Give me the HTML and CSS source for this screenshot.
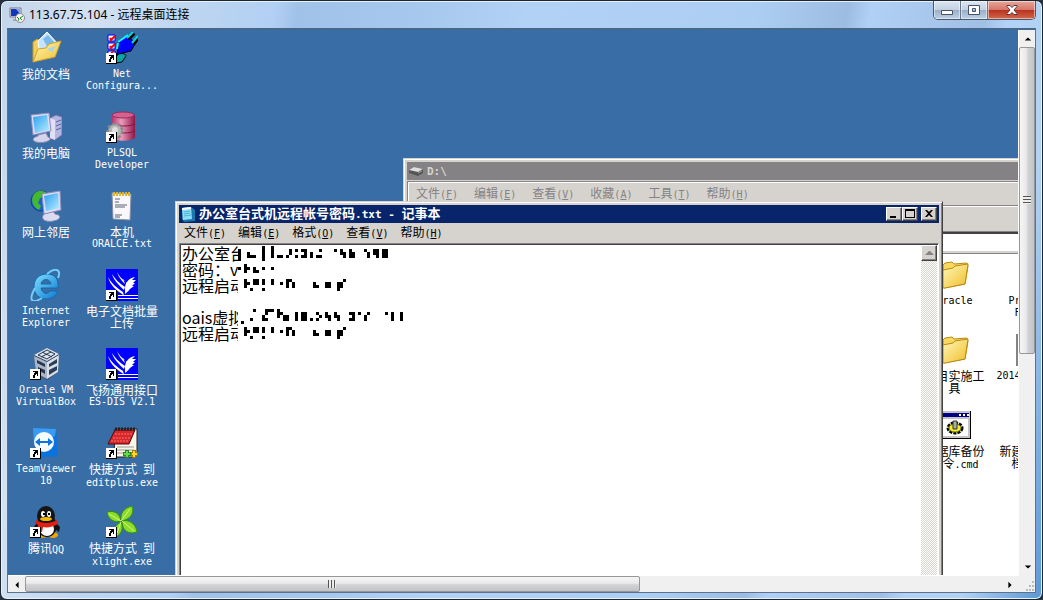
FILE: index.html
```html
<!DOCTYPE html>
<html lang="zh-CN">
  <head>
    <meta charset="UTF-8" />
    <title>113.67.75.104 - 远程桌面连接</title>
    <link rel="stylesheet" href="styles.css">
  </head>

  <body>
    <!-- shared icons -->
    <svg class="defs" width="0" height="0" aria-hidden="true">
      <linearGradient id="gold" x1="0" y1="0" x2="1" y2="1">
        <stop offset="0" stop-color="#fff9b8" />
        <stop offset="1" stop-color="#efbd2c" />
      </linearGradient>
      <linearGradient id="screen" x1="0" y1="0" x2="1" y2="1">
        <stop offset="0" stop-color="#2f9df0" />
        <stop offset="1" stop-color="#b4f0ff" />
      </linearGradient>
      <linearGradient id="plum" x1="0" y1="0" x2="1" y2="0">
        <stop offset="0" stop-color="#b8346e" />
        <stop offset=".4" stop-color="#ee9cbc" />
        <stop offset="1" stop-color="#8e1648" />
      </linearGradient>
      <linearGradient id="sea" x1="0" y1="0" x2="1" y2="1">
        <stop offset="0" stop-color="#7fe0ff" />
        <stop offset="1" stop-color="#0b79cf" />
      </linearGradient>
      <symbol id="shortcut" viewBox="0 0 32 32">
        <path d="M0 21h11v11H0z" fill="#000" />
        <path d="M0 21h10v10H0z" fill="#fff" />
        <path d="M3 23h5v5H7v-2H6v1H5v3H3v-3h1v-2h1v-1H3z" fill="#000" />
      </symbol>
      <symbol id="folder" viewBox="0 0 32 32">
        <path d="M4 6l2-2 7-1 2 2 13-1 1 3-3 18-21 4z" fill="#f7d860" stroke="#bb8a10" />
        <path d="M4 29V11l10-2 2-2 13-2-3 20-20 4z" fill="url(#gold)" stroke="#bb8a10" />
      </symbol>
      <symbol id="bird" viewBox="0 0 32 32">
        <path d="M0 0h32v32H0z" fill="#00f" />
        <path d="M2 8c2 8 8 13 14 17l2 2-1-4C11 19 6 15 2 8zM6 5c2 7 7 11 12 16l1-3C13 14 9 10 6 5zM11 3c2 6 5 9 9 13v-3c-4-3-7-6-9-10zM19 25v-7c1-5 4-9 10-10l-3 3h4l-3 3h2l-3 3h2l-4 3c-1 2-3 3-5 5zM17 10l4 4-1 3z" fill="#fff" />
        <path d="M12 26h20v1H12zM12 29h20v1H12z" fill="#fff" />
      </symbol>
      <symbol id="notepad" viewBox="0 0 16 16">
        <path d="M2 2l9-1 4 3v11l-11 1-2-3z" fill="#1879ad" />
        <path d="M2 2l9-1 1 12-9 1z" fill="#8fdcf5" />
        <path d="M2 2l9-1v2l-9 1z" fill="#fff" />
        <path d="M4 6l6-1M4 8l6-1M4 10l7-1" stroke="#4db4dc" />
      </symbol>
    </svg>

    <div class="rdp">
      <header class="rdp-title">
        <svg class="rdp-icon" viewBox="0 0 16 16">
          <path d="M1 1h11v9H1z" fill="#e6e6ee" stroke="#77778c" />
          <path d="M2 2h9v7H2z" fill="#1236b8" />
          <path d="M7 2h4v5z" fill="#7da6f4" />
          <path d="M4 12h7v2H4z" fill="#a5a5b4" />
          <circle cx="11" cy="11" r="4.5" fill="#f3f3f3" stroke="#8a8a8a" />
          <path d="M8 10l2 2-1 2M14 9l-3 2 2 2" fill="none" stroke="#218a1d" />
        </svg>
        <h1>113.67.75.104 - 远程桌面连接</h1>
        <div class="caption-buttons">
          <button class="cap cap-min" aria-label="最小化">
            <svg viewBox="0 0 14 12"><path d="M1.500 6.500h11v4h-11z" fill="#fff" stroke="#44526b" /></svg>
          </button>
          <button class="cap cap-max" aria-label="最大化">
            <svg viewBox="0 0 14 12"><path d="M1.500 1.500h11v9h-11zM5.500 4.500v3h3v-3z" fill="#fff" fill-rule="evenodd" stroke="#44526b" /></svg>
          </button>
          <button class="cap cap-close" aria-label="关闭">
            <svg viewBox="0 0 14 12"><path d="M2 1.500h3l2 2 2-2h3v1L9 6l3 3.500v1H9l-2-2-2 2H2v-1L5 6 2 2.500z" fill="#fff" stroke="#5b3036" /></svg>
          </button>
        </div>
      </header>

      <div class="client">
        <main class="desktop">
          <ul class="shortcuts">
            <li>
              <svg class="icon" viewBox="0 0 32 32">
                <path d="M3 10l4-3 4 2 1 18-9 3z" fill="#f4cf58" stroke="#c99a25" />
                <path d="M8 9l9-9 11 12-9 13-10-7z" fill="#c4e4fb" stroke="#fff" />
                <path d="M13 7l5-4 6 7-6 6z" fill="#78b8ee" />
                <path d="M3 30l5-13 8-1 3-4 12-3-6 16z" fill="url(#gold)" stroke="#d0a02a" />
                <path d="M17 17l9-3-4 6z" fill="#a5d5f5" />
              </svg>
              <a href="#">我的文档</a>
            </li>
            <li>
              <svg class="icon" viewBox="0 0 32 32">
                <path d="M8 24l8-2 2 4c3 1 3 3 0 4-4 2-11 2-14 0-2-2 0-4 4-5z" fill="#d5d4ea" stroke="#8788b5" />
                <path d="M20 7l6-3 6 2v18l-7 5-5-2z" fill="#b5b5e1" stroke="#7273ab" />
                <path d="M20 7l5 2v20l-5-2z" fill="#e0e0f5" />
                <path d="M26 11l5-2M26 15l5-2M26 19l5-2" stroke="#5e609d" />
                <path d="M1 4L19 2l2 18-18 4z" fill="#dcdcf2" stroke="#8c8cc0" />
                <path d="M3 6l14-2 2 15-14 3z" fill="url(#screen)" />
              </svg>
              <a href="#">我的电脑</a>
            </li>
            <li>
              <svg class="icon" viewBox="0 0 32 32">
                <circle cx="11" cy="11" r="10" fill="#1a63cf" stroke="#0b418f" />
                <path d="M4 4c5-5 9-3 13-1l-3 4-4 1-2 5 3 3-2 4c-6-3-9-10-5-16z" fill="#45b92e" />
                <path d="M14 24l9-3 2 3c6 1 6 4 2 6-5 2-12 2-14-1-1-2 0-4 1-5z" fill="#dcdcf0" stroke="#8788b5" />
                <path d="M12 4l18-3 1 19-17 4z" fill="#dcdcf2" stroke="#8c8cc0" />
                <path d="M14 6l14-3 1 15-13 3z" fill="url(#screen)" />
              </svg>
              <a href="#">网上邻居</a>
            </li>
            <li>
              <svg class="icon" viewBox="0 0 32 32">
                <path d="M28 19c1-9-3-14-11-14C9 5 4 10 4 18c0 7 5 12 12 12 6 0 10-3 12-8h-8c-2 4-8 3-9-3zM11 15c1-6 9-6 10 0z" fill="url(#sea)" fill-rule="evenodd" stroke="#1668ae" />
                <path d="M5 19C-3 34 4 34 12 29M17 5c8-7 15-5 11 4" fill="none" stroke="#72cff8" stroke-width="2" />
              </svg>
              <a href="#"><span class="en">Internet</span><span class="en">Explorer</span></a>
            </li>
            <li>
              <svg class="icon" viewBox="0 0 32 32">
                <path d="M4 7L17 0l12 6-1 18-11 8L6 25z" fill="#30425a" />
                <path d="M4 7L17 0l12 6-12 7z" fill="#dce4ee" />
                <path d="M8 7l9-5 8 4-8 5zM12 4l10 5M21 4L11 9" fill="none" stroke="#24364e" />
                <path d="M4 8l13 6v17L6 25z" fill="#aab6c6" />
                <path d="M7 12l8 4v3l-8-4zM8 19l7 3v4l-7-4z" fill="#26384f" />
                <path d="M17 14l12-7-1 17-11 7z" fill="#d8dfe8" />
                <path d="M19 16l8-5v4l-8 4zM19 22l8-4v4l-8 5z" fill="#2c3e56" />
                <use href="#shortcut" />
              </svg>
              <a href="#"><span class="en">Oracle VM</span><span class="en">VirtualBox</span></a>
            </li>
            <li>
              <svg class="icon" viewBox="0 0 32 32">
                <path d="M3 1l23 1 2 27-22 2z" fill="#0b73e0" />
                <path d="M3 1l23 1-1 7L4 17z" fill="#3a9bf5" />
                <circle cx="14" cy="15" r="10" fill="#f5fbff" />
                <path d="M5 15l5-4v3h8v-3l5 4-5 4v-3h-8v3z" fill="#0d74dd" />
                <use href="#shortcut" />
              </svg>
              <a href="#"><span class="en">TeamViewer</span><span class="en">10</span></a>
            </li>
            <li>
              <svg class="icon" viewBox="0 0 32 32">
                <path d="M7 17L2 23l2 3 5-4zM25 16l5 5-1 5-5-4z" fill="#111" />
                <ellipse cx="12" cy="29" rx="6" ry="3" fill="#f6a400" />
                <ellipse cx="23" cy="29" rx="5" ry="3" fill="#f6a400" />
                <ellipse cx="17" cy="20" rx="10" ry="11" fill="#111" />
                <ellipse cx="17" cy="23" rx="7" ry="7" fill="#fff" />
                <ellipse cx="16" cy="10" rx="9" ry="10" fill="#151515" />
                <ellipse cx="13" cy="8" rx="2" ry="3" fill="#fff" />
                <ellipse cx="19" cy="8" rx="2" ry="3" fill="#fff" />
                <path d="M13 7h2v2h-2zM18 7h2v2h-2z" />
                <ellipse cx="16" cy="13" rx="6" ry="2" fill="#f9b400" />
                <path d="M6 14c6 4 14 4 21 0l1 4c-5 3-11 4-15 3l-1 5-5-1 1-6-3-2z" fill="#e21f12" />
                <use href="#shortcut" />
              </svg>
              <a href="#">腾讯<span class="mix">QQ</span></a>
            </li>
            <li>
              <svg class="icon" viewBox="0 0 32 32">
                <path d="M2 3h7v6H2zM2 11h7v6H2zM2 19h7v3H2z" fill="#fff" stroke="#00f" />
                <path d="M4 6l1 2 4-4M4 14l1 2 4-4M5 21l3-2" fill="none" stroke="#f00" stroke-width="2" />
                <path d="M12 10l10-7 7 9-4 7-9 2-2 5-3-4 1-6z" fill="#00f" stroke="#000" />
                <path d="M12 10l10-7M12 11l-1 6" stroke="#0ff" stroke-width="2" />
                <path d="M22 7l6-6M27 12l5-6" stroke="#000" stroke-width="4" />
                <path d="M21 6l6-6M26 11l6-7" stroke="#0dd" stroke-width="2" />
                <path d="M10 25c2-5 10-4 10-1l-4 6-6 1z" fill="#0aa6a6" stroke="#000" />
                <use href="#shortcut" />
              </svg>
              <a href="#"><span class="en">Net</span><span class="en">Configura...</span></a>
            </li>
            <li>
              <svg class="icon" viewBox="0 0 32 32">
                <path d="M6 4v22c0 5 23 5 23 0V4z" fill="url(#plum)" />
                <ellipse cx="17" cy="4" rx="11" ry="3" fill="#d5618f" stroke="#9c2d5b" />
                <path d="M6 12c0 4 23 4 23 0M6 19c0 4 23 4 23 0" fill="none" stroke="#801542" />
                <circle cx="9" cy="20" r="7" fill="#a9a9a9" stroke="#8a8a8a" stroke-width="3" stroke-dasharray="3 2" />
                <circle cx="9" cy="20" r="6" fill="#b4b4b4" />
                <circle cx="9" cy="19" r="3" fill="#dedede" />
                <use href="#shortcut" />
              </svg>
              <a href="#"><span class="en">PLSQL</span><span class="en">Developer</span></a>
            </li>
            <li>
              <svg class="icon" viewBox="0 0 32 32">
                <path d="M6 3l19 1-1 26-17-1z" fill="#f8f8fb" stroke="#8a8fa5" />
                <path d="M7 4h18" stroke="#e0b424" stroke-width="4" stroke-dasharray="2 1" />
                <path d="M9 9h5M9 15h12M9 17h10M9 12h4M9 25h7M9 27h5" stroke="#5d6274" />
              </svg>
              <a href="#">本机<span class="en">ORALCE.txt</span></a>
            </li>
            <li>
              <svg class="icon" viewBox="0 0 32 32"><use href="#bird" /><use href="#shortcut" /></svg>
              <a href="#">电子文档批量<br>上传</a>
            </li>
            <li>
              <svg class="icon" viewBox="0 0 32 32"><use href="#bird" /><use href="#shortcut" /></svg>
              <a href="#">飞扬通用接口<span class="en">ES-DIS V2.1</span></a>
            </li>
            <li>
              <svg class="icon" viewBox="0 0 32 32">
                <path d="M9 2h22v25l-4 3H8z" fill="#f8f6e8" stroke="#222" />
                <path d="M11 20h17M11 23h17M11 26h12" stroke="#9a9a9a" />
                <path d="M9 3h20l-6 14H2z" fill="#d8262a" stroke="#4c0a0c" />
                <path d="M9 7h17M7 11h17M5 14h17" stroke="#f57970" stroke-dasharray="2 1" />
                <path d="M9 2h20" stroke="#222" stroke-width="3" stroke-dasharray="2 1" />
                <path d="M17 27h8M21 23v8" stroke="#278a1c" stroke-width="4" />
                <path d="M18 27h6M21 24v6" stroke="#6bd653" stroke-width="2" />
                <path d="M25 27h7M28 23v8" stroke="#a97800" stroke-width="4" />
                <path d="M26 27h5M28 24v6" stroke="#ffd82e" stroke-width="2" />
                <use href="#shortcut" />
              </svg>
              <a href="#">快捷方式<span class="mix"> </span>到<span class="en">editplus.exe</span></a>
            </li>
            <li>
              <svg class="icon" viewBox="0 0 32 32">
                <g fill="#8edc28" stroke="#2e9212">
                  <path d="M15 15C9 17 2 14 1 6c8-2 13 2 14 9z" />
                  <path d="M15 15c-1-8 3-13 11-15 3 7-2 14-11 15z" />
                  <path d="M16 15c7-2 14 3 15 11-8 3-15-1-15-11z" />
                  <path d="M15 16c3 7 0 12-5 15-4-5-2-12 5-15z" />
                </g>
                <path d="M3 8l12 7 9-12M16 15l12 10M15 16l-4 11" fill="none" stroke="#d3f58c" />
                <use href="#shortcut" />
              </svg>
              <a href="#">快捷方式<span class="mix"> </span>到<span class="en">xlight.exe</span></a>
            </li>
          </ul>

          <section class="window explorer">
            <div class="titlebar">
              <svg class="title-icon" viewBox="0 0 16 16">
                <path d="M1 7l5-3 9 2v4l-5 3-9-3z" fill="#555" />
                <path d="M1 7l5-3 9 2-5 3z" fill="#ddd" />
                <path d="M10 10l4-2" stroke="#9d9d9d" />
              </svg>
              <h2><span class="title-en">D:\</span></h2>
            </div>
            <div class="explorer-bars">
              <nav class="menubar">
                <button>文件<span class="en">(<u>F</u>)</span></button>
                <button>编辑<span class="en">(<u>E</u>)</span></button>
                <button>查看<span class="en">(<u>V</u>)</span></button>
                <button>收藏<span class="en">(<u>A</u>)</span></button>
                <button>工具<span class="en">(<u>T</u>)</span></button>
                <button>帮助<span class="en">(<u>H</u>)</span></button>
              </nav>
              <div class="toolbar"></div>
            </div>
            <div class="address"></div>
            <ul class="files">
              <li>
                <svg class="icon" viewBox="0 0 32 32"><use href="#folder" /></svg>
                <a href="#"><span class="en">Oracle</span></a>
              </li>
              <li>
                <svg class="icon" viewBox="0 0 32 32"></svg>
                <a href="#"><span class="en">Program</span><span class="en">Files</span></a>
              </li>
              <li>
                <svg class="icon" viewBox="0 0 32 32"><use href="#folder" /></svg>
                <a href="#">项目实施工<br>具</a>
              </li>
              <li>
                <svg class="icon" viewBox="0 0 32 32"><path d="M3 1h26v30H3z" fill="#fff" stroke="#848284" stroke-width="2" /></svg>
                <a href="#"><span class="en">20141103_db</span></a>
              </li>
              <li>
                <svg class="icon" viewBox="0 0 32 32">
                  <path d="M0 2h32v28H0z" fill="#000" />
                  <path d="M0 2h31v27H0z" fill="#c6c3c6" />
                  <path d="M1 4h29v4H1z" fill="#000084" />
                  <path d="M20 5h2v2h-2zM24 5h2v2h-2zM28 5h2v2h-2z" fill="#fff" />
                  <path d="M1 10h28v17H1z" fill="#fff" />
                  <ellipse cx="16" cy="19" rx="7" ry="5" fill="#e4e020" stroke="#000" stroke-width="3" stroke-dasharray="3 1" />
                  <ellipse cx="16" cy="19" rx="6" ry="4" fill="#f2ef2c" stroke="#77750e" />
                  <path d="M14 12h4v8h-4z" fill="#aaa" stroke="#333" />
                </svg>
                <a href="#">数据库备份<br>命令<span class="mix">.cmd</span></a>
              </li>
              <li>
                <svg class="icon" viewBox="0 0 32 32"></svg>
                <a href="#">新建文本文<br>档<span class="mix">.txt</span></a>
              </li>
            </ul>
          </section>

          <section class="window notepad">
            <div class="titlebar">
              <svg class="title-icon" viewBox="0 0 16 16"><use href="#notepad" /></svg>
              <h2>办公室台式机远程帐号密码<span class="title-en">.txt - </span>记事本</h2>
              <div class="window-buttons">
                <button aria-label="最小化"><svg viewBox="0 0 12 10"><path d="M2 7h6v2H2z" /></svg></button>
                <button aria-label="最大化"><svg viewBox="0 0 12 10"><path d="M1 0h10v9H1zM2 2v6h8V2z" fill-rule="evenodd" /></svg></button>
                <button class="close" aria-label="关闭"><svg viewBox="0 0 12 10"><path d="M2 1h2l2 2 2-2h2L7 4.500 10 8H8L6 6 4 8H2l3-3.500z" /></svg></button>
              </div>
            </div>
            <nav class="menubar">
              <button>文件<span class="en">(<u>F</u>)</span></button>
              <button>编辑<span class="en">(<u>E</u>)</span></button>
              <button>格式<span class="en">(<u>O</u>)</span></button>
              <button>查看<span class="en">(<u>V</u>)</span></button>
              <button>帮助<span class="en">(<u>H</u>)</span></button>
            </nav>
            <div class="editor">
              <textarea aria-label="记事本" spellcheck="false">办公室台
密码：v
远程启动

oais虚拟
远程启动</textarea>
              <!-- redaction blocks over the account details, one unit per block -->
              <svg class="redacted" viewBox="-0.500 0 60 32" shape-rendering="crispEdges">
                <g fill="none" stroke="#000">
                  <path d="M0 1v4M3 2v2M4 3v1M5 3v1M8 0v5M11 0v4M13 3v1M14 3v1M16 3v1M17 1v2M19 1v1M19 3v1M21 1v1M21 3v1M22 1v3M24 2v2M26 3v1M27 1v1M27 3v1M32 1v1M34 1v2M35 2v2M37 1v3M38 2v2M42 1v1M43 2v2M45 1v2M46 1v3M48 1v3M49 1v3" />
                  <path d="M0 7v1M2 6v3M3 7v1M5 7v2M6 8v1M8 7v1M11 7v1" />
                  <path id="blocks" d="M2 11v3M3 12v1M4 14v1M5 11v2M6 11v2M8 11v2M8 14v1M11 11v2M14 12v1M16 11v3M17 11v1M18 12v2M25 12v2M26 13v1M29 12v2M30 12v2M33 12v3M34 12v2M35 11v1" />
                  <path d="M1 25v1M4 24v1M5 21v1M8 23v2M9 21v2M9 24v1M10 21v1M11 21v1M13 21v3M14 22v1M15 23v2M16 23v2M19 22v3M21 22v3M22 22v3M24 24v1M26 22v1M26 24v1M27 23v1M29 22v2M30 23v2M32 22v2M33 23v2M37 22v1M37 24v1M38 22v3M40 22v1M42 23v2M43 22v1M49 22v1M51 22v3M54 22v3" />
                  <use href="#blocks" y="16" />
                </g>
              </svg>
              <div class="scroll">
                <button aria-label="向上滚动"><svg viewBox="0 0 12 12"><path d="M2 8h9L7 4H6z" fill="#848284" /></svg></button>
              </div>
            </div>
          </section>
        </main>

        <div class="vscroll">
          <button aria-label="向上"><svg viewBox="0 0 10 10"><path d="M1 7l4-4 4 4z" /></svg></button>
          <div class="track"><div class="thumb"></div></div>
          <button aria-label="向下"><svg viewBox="0 0 10 10"><path d="M1 3l4 4 4-4z" /></svg></button>
        </div>
        <div class="hscroll">
          <button aria-label="向左"><svg viewBox="0 0 10 10"><path d="M7 1L3 5l4 4z" /></svg></button>
          <div class="track"><div class="thumb"></div></div>
          <button aria-label="向右"><svg viewBox="0 0 10 10"><path d="M3 1l4 4-4 4z" /></svg></button>
        </div>
        <div class="corner">
          <svg viewBox="0 0 12 12"><path d="M9 1h2v2H9zM6 5h2v2H6zM9 5h2v2H9zM3 9h2v2H3zM6 9h2v2H6zM9 9h2v2H9z" fill="#bbb" /></svg>
        </div>
      </div>
    </div>
  </body>
</html>
```

FILE: styles.css
```css
* {
  box-sizing: border-box;
}

body {
  margin: 0;
  background: #26323f;
  font-family: "Noto Sans CJK SC", sans-serif;
  font-size: 12px;
  line-height: 12px;
  color: #000;
}

h1,
h2,
ul {
  margin: 0;
  padding: 0;
  font-size: inherit;
  list-style: none;
}

button {
  margin: 0;
  padding: 0;
  border: 0;
  background: none;
  font: inherit;
  color: inherit;
}

svg {
  display: block;
}

a {
  color: inherit;
  text-decoration: none;
}

.defs {
  position: absolute;
}

.en,
.mix {
  font-family: "DejaVu Sans Mono", monospace;
  font-size: 10px;
}

/* remote desktop frame */
.rdp {
  display: flex;
  flex-direction: column;
  height: 100vh;
  padding: 0 6px 6px;
  border: 1px solid #1d2530;
  border-radius: 7px;
  background: linear-gradient(100deg, #c3d5ea 0, #d3e1f1 8%, #bfd6f0 16%, #b1d0f4 24%, #a1c2e8 26%, #a8c9ee 38%, #b1d1f5 46%, #adcef3 66%, #9cbce2 74%, #b0d0f5 76%, #9fbfe5 86%, #b3d2f5 88%, #b2d2f4 93%, #5b97d4 100%);
  box-shadow: inset 0 0 0 1px #e8f2fc;
}

.rdp-title {
  display: flex;
  align-items: center;
  height: 27px;
  padding-left: 2px;
}

.rdp-title h1 {
  flex: 1;
  margin-left: 4px;
  font-family: "Noto Sans", "Noto Sans CJK SC", sans-serif;
  font-weight: normal;
  line-height: 16px;
}

.rdp-icon {
  width: 16px;
  height: 16px;
}

.caption-buttons {
  display: flex;
  align-self: flex-start;
  border: 1px solid #4b5666;
  border-top: 0;
  border-radius: 0 0 5px 5px;
  overflow: hidden;
}

.cap {
  display: grid;
  place-items: center;
  width: 27px;
  height: 18px;
  border-right: 1px solid #69778b;
  background: linear-gradient(#dce6f1 0, #c3d1e1 48%, #9aaec7 50%, #bdd0e6 100%);
  box-shadow: inset 0 0 0 1px rgba(255, 255, 255, 0.5);
}

.cap svg {
  width: 14px;
  height: 12px;
}

.cap-close {
  width: 47px;
  border: 0;
  background: linear-gradient(#e7a799 0, #d4776a 48%, #b9301c 50%, #d2694c 100%);
}

.client {
  flex: 1;
  min-height: 0;
  display: grid;
  grid-template-columns: 1fr 17px;
  grid-template-rows: 1fr 17px;
  border: 1px solid #59728e;
  border-top: 2px solid #46688d;
}

.desktop {
  position: relative;
  overflow: hidden;
  background: #396da5;
}

/* desktop icons */
.shortcuts {
  display: grid;
  grid-auto-flow: column;
  grid-template-rows: repeat(7, 79px);
  grid-auto-columns: 76px;
  justify-content: start;
  padding-top: 2px;
  color: #fff;
}

.shortcuts li,
.files li {
  display: flex;
  flex-direction: column;
  align-items: center;
  gap: 4px;
  text-align: center;
  white-space: nowrap;
}

.icon {
  width: 32px;
  height: 32px;
}

.shortcuts .en,
.files .en {
  display: block;
}

/* classic windows */
.window {
  position: absolute;
  display: flex;
  flex-direction: column;
  padding: 3px;
  border: 1px solid #d6d3ce;
  border-right-color: #424142;
  background: #d6d3ce;
  box-shadow: inset 1px 1px #fff, inset -1px 0 #848284;
}

.titlebar {
  display: flex;
  align-items: center;
  height: 18px;
  padding: 0 2px 0 1px;
  background: #08246b;
  color: #fff;
}

.titlebar h2 {
  flex: 1;
  margin-left: 3px;
  font-size: 13px;
  line-height: 18px;
  white-space: pre;
}

.title-en {
  font-family: "DejaVu Sans Mono", monospace;
  font-size: 11px;
}

.title-icon {
  width: 16px;
  height: 16px;
}

.menubar {
  display: flex;
  gap: 12px;
  align-items: center;
  height: 20px;
  padding-left: 5px;
}

.menubar u {
  text-underline-offset: 1px;
}

.window-buttons {
  display: flex;
}

.window-buttons button,
.scroll button {
  display: grid;
  place-items: center;
  width: 16px;
  height: 14px;
  border: 1px solid #fff;
  border-right-color: #424142;
  border-bottom-color: #424142;
  background: #d6d3ce;
  box-shadow: inset -1px -1px #848284;
}

.window-buttons svg {
  width: 12px;
  height: 10px;
}

.window-buttons .close {
  margin-left: 3px;
}

.notepad {
  top: 171px;
  bottom: -40px;
  left: 167px;
  width: 768px;
}

.editor {
  position: relative;
  flex: 1;
  display: flex;
  padding: 1px 1px 0;
  border: 1px solid #848284;
  border-right-color: #fff;
  box-shadow: inset 1px 1px #424142;
  background: #fff;
}

.editor textarea {
  flex: 1;
  padding: 0 1px;
  border: 0;
  outline: 0;
  resize: none;
  overflow: hidden;
  background: #fff;
  font-family: "Noto Sans CJK SC", sans-serif;
  font-size: 16px;
  line-height: 16px;
  color: #000;
}

.redacted {
  position: absolute;
  top: 2px;
  left: 58px;
  width: 180px;
  height: 96px;
  background: #fff;
  pointer-events: none;
}

.scroll {
  width: 16px;
  background: repeating-conic-gradient(#d6d3ce 0 25%, #fff 0 50%) 0 0 / 2px 2px;
}

.scroll button {
  height: 16px;
}

.scroll svg {
  width: 12px;
  height: 12px;
}

.explorer {
  top: 128px;
  right: -90px;
  bottom: -40px;
  left: 395px;
}

.explorer .titlebar {
  background: #848284;
  color: #d6d3ce;
}

.explorer-bars {
  margin-top: 1px;
  border: 1px solid #848284;
  box-shadow: inset 1px 1px #fff;
  color: #848284;
}

.explorer .menubar {
  gap: 16px;
  height: 24px;
  padding-left: 8px;
  border-bottom: 1px solid #848284;
}

.toolbar {
  height: 25px;
  border-top: 1px solid #fff;
}

.address {
  height: 20px;
  border-top: 2px solid #424142;
  border-bottom: 1px solid #d6d3ce;
  background: #fff;
}

.files {
  flex: 1;
  display: grid;
  grid-template-columns: 75px 75px;
  grid-auto-rows: 75px;
  align-content: start;
  margin-top: 1px;
  padding: 5px 0 0 510px;
  border-top: 1px solid #848284;
  background: #fff;
}

/* outer scrollbars */
.vscroll,
.hscroll {
  display: flex;
  background: #f0f0f0;
}

.vscroll {
  flex-direction: column;
  border-left: 1px solid #fff;
}

.hscroll {
  border-top: 1px solid #fff;
}

.vscroll button,
.hscroll button {
  display: grid;
  place-items: center;
  width: 17px;
  height: 17px;
}

.vscroll button svg,
.hscroll button svg {
  width: 8px;
  height: 8px;
}

.track {
  flex: 1;
  display: flex;
}

.vscroll .track {
  flex-direction: column;
}

.thumb {
  border: 1px solid #979797;
  border-radius: 2px;
}

.vscroll .thumb {
  display: grid;
  place-items: center;
  height: 60%;
  background: linear-gradient(90deg, #f6f6f6, #e9e9eb 45%, #d2d3d6 55%, #c2c3c6);
}

.hscroll .thumb {
  display: grid;
  place-items: center;
  width: 63%;
  background: linear-gradient(#f6f6f6, #e9e9eb 45%, #d2d3d6 55%, #c2c3c6);
}

.thumb::before {
  content: "";
  width: 8px;
  height: 8px;
  background: repeating-linear-gradient(#555 0 1px, #eee 1px 3px);
}

.hscroll .thumb::before {
  background: repeating-linear-gradient(90deg, #555 0 1px, #eee 1px 3px);
}

.corner {
  display: grid;
  place-items: end;
  background: #f0f0f0;
}

.corner svg {
  width: 12px;
  height: 12px;
}
```
